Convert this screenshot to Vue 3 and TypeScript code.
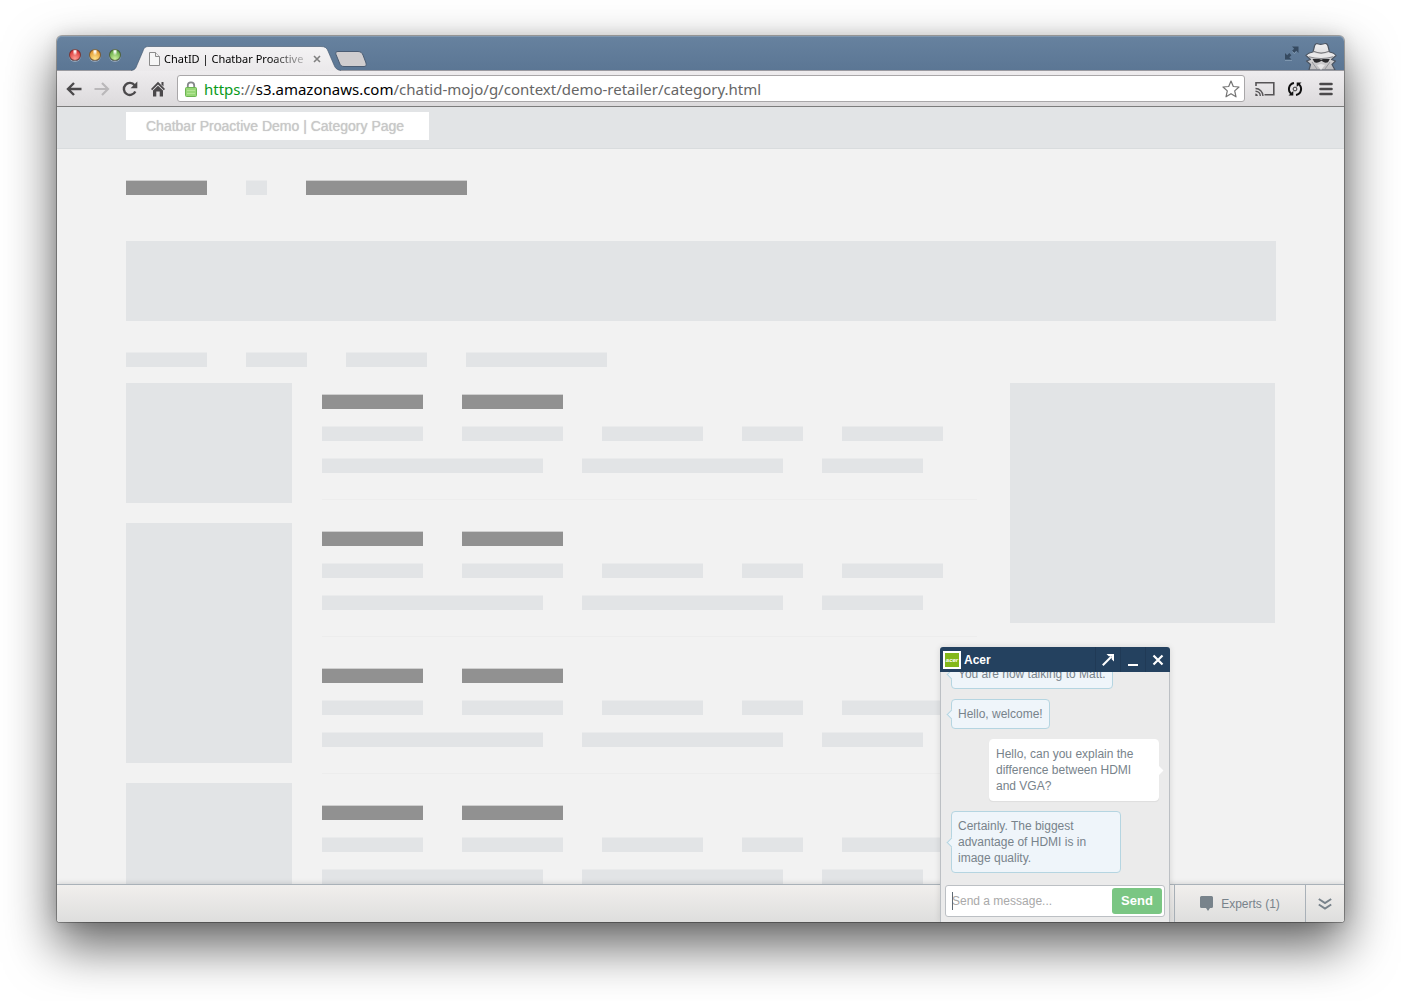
<script setup lang="ts">
import { ref } from 'vue'

interface Message {
  from: 'agent' | 'visitor'
  text: string
}

const messages: Message[] = [
  { from: 'agent', text: 'You are now talking to Matt.' },
  { from: 'agent', text: 'Hello, welcome!' },
  { from: 'visitor', text: 'Hello, can you explain the difference between HDMI and VGA?' },
  { from: 'agent', text: 'Certainly. The biggest advantage of HDMI is in image quality.' },
]

const breadcrumb = [
  { width: 81, dark: true },
  { width: 21, dark: false },
  { width: 161, dark: true },
]
const filters = [81, 61, 81, 141]
const productRows = [
  { dark: true, widths: [101, 101] },
  { dark: false, widths: [101, 101, 101, 61, 101] },
  { dark: false, widths: [221, 201, 101] },
]
const products = [1, 2, 3, 4]

const draft = ref('')
</script>

<template>
  <div class="desktop">
    <div class="window">
      <header class="tabstrip">
        <div class="lights">
          <button class="light red" aria-label="Close window"></button>
          <button class="light amber" aria-label="Minimise window"></button>
          <button class="light green" aria-label="Zoom window"></button>
        </div>
        <div class="tab">
          <svg class="tab-shape" viewBox="0 0 210 25" width="210" height="25" aria-hidden="true">
            <defs>
              <linearGradient id="tabfill" x1="0" y1="0" x2="0" y2="1">
                <stop offset="0" stop-color="#f4f3f4" />
                <stop offset="1" stop-color="#ebe9eb" />
              </linearGradient>
            </defs>
            <path
              d="M0 25 C4 24 5 22 6 19 L12 5 C13 2 14 .5 18 .5 H190 C194 .5 196 2 197 5 L203 19 C204 22 206 24 210 25 Z"
              fill="url(#tabfill)"
            />
            <path
              d="M0 24.500 C4 24 5 22 6 19 L12 5 C13 2 14 .5 18 .5 H190 C194 .5 196 2 197 5 L203 19 C204 22 206 24 210 24.500"
              fill="none"
              stroke="#40536b"
              stroke-opacity=".6"
            />
          </svg>
          <svg class="doc" viewBox="0 0 11 14" width="11" height="14" aria-hidden="true">
            <path d="M.5 .5H6.500L10.500 4.500V13.500H.5Z" fill="#f6f6f6" stroke="#8b8b8b" />
            <path d="M6.500 .5V4.500H10.500" fill="#eee" stroke="#8b8b8b" />
          </svg>
          <span class="tab-title">ChatID | Chatbar Proactive</span>
          <button class="tab-close" aria-label="Close tab">
            <svg viewBox="0 0 8 8" width="8" height="8"><path d="M1 1L7 7M7 1L1 7" stroke="#808080" stroke-width="1.600" /></svg>
          </button>
        </div>
        <button class="new-tab" aria-label="New tab">
          <svg viewBox="0 0 32 16" width="32" height="16">
            <path d="M3 .5H23C26 .5 27 2 28 4L31 12C31.500 14.500 31 15.500 29 15.500H9C6.500 15.500 5.500 14.500 4.500 12L1 3.500C.3 1.500 1 .5 3 .5Z" fill="#cfcdcf" stroke="#4a5c73" />
          </svg>
        </button>
        <span class="spacer"></span>
        <button class="fullscreen" aria-label="Enter full screen">
          <svg viewBox="0 0 16 16" width="16" height="16">
            <path d="M8 1.500H14.500V8L12.300 5.800L10.200 7.900L8.100 5.800L10.200 3.700ZM1 8L3.200 10.200L5.300 8.100L7.400 10.200L5.300 12.300L7.500 14.500H1Z" fill="#364a60" />
            <path d="M1 15.500H8M8.500 6.500L10.200 8.600L12.300 6.600" fill="none" stroke="#8da3b9" stroke-width=".7" />
          </svg>
        </button>
        <svg class="incognito" viewBox="0 0 34 28" width="34" height="28" aria-hidden="true">
          <defs>
            <linearGradient id="coat" x1="0" y1="0" x2="0" y2="1">
              <stop offset="0" stop-color="#f2f1f2" />
              <stop offset="1" stop-color="#bdbcbe" />
            </linearGradient>
          </defs>
          <path d="M5 28L6.500 22.500L2.500 19L6.500 17.500L2 13.500Q4.500 11 9 10.200L10.500 4C11.200 1.500 13 1.300 14.500 2Q16.500 2.800 19 2C21.500 1 23.300 1.500 24 4L25.500 10.200Q30 11 32 13.500L27.500 17.500L31.500 19L28 22.500L31 28Z" fill="url(#coat)" stroke="#4c5562" stroke-width="1.200" stroke-linejoin="round" />
          <path d="M2.500 13.500Q4.500 11.300 9 10.500Q17 13.500 25.500 10.500Q30 11.300 31.500 13.500Q17 18.500 2.500 13.500Z" fill="#e9e8e9" />
          <path d="M9.300 9.300Q17 12.800 25.200 9.300" fill="none" stroke="#77777b" stroke-width="1.200" />
          <path d="M5 14.800Q17 18.300 29 14.800" fill="none" stroke="#88888c" stroke-width="1" />
          <path d="M8.500 17H15.300L17.200 17.800L19 17H25.800L24 20.300Q21.500 21.300 19.500 20L17.500 18.800L15.300 20Q12.500 21.300 10.500 20.300Z" fill="#2b2b2e" />
          <path d="M8 20L13 27M26 20L21 27" fill="none" stroke="#97979b" />
          <path d="M13 23L17 28L21 23L17 22Z" fill="#e6e5e6" />
        </svg>
      </header>

      <nav class="toolbar">
        <button class="tool" aria-label="Back">
          <svg viewBox="0 0 16 16" width="16" height="16"><path d="M8 2L2 8L8 14M2 8H15.500" fill="none" stroke="#4b494b" stroke-width="2.400" /></svg>
        </button>
        <button class="tool" aria-label="Forward">
          <svg viewBox="0 0 16 16" width="16" height="16"><path d="M8 2L14 8L8 14M14 8H.5" fill="none" stroke="#bab8ba" stroke-width="2.200" /></svg>
        </button>
        <button class="tool" aria-label="Reload">
          <svg viewBox="0 0 16 16" width="16" height="16">
            <path d="M12.600 4.200A6 6 0 1 0 13.300 10.500" fill="none" stroke="#4b494b" stroke-width="2.400" />
            <path d="M15.300 .5V7.200H8.600Z" fill="#4b494b" />
          </svg>
        </button>
        <button class="tool" aria-label="Home">
          <svg viewBox="0 0 16 16" width="16" height="16">
            <path d="M8 .8L15 8L13.800 9.200L8 3.400L2.200 9.200L1 8Z" fill="#4b494b" />
            <path d="M11.500 1H13.500V5.500L11.500 3.500Z" fill="#4b494b" />
            <path d="M8 4.800L13 9.600V15.500H9.700V10.500H6.300V15.500H3V9.600Z" fill="#4b494b" />
          </svg>
        </button>
        <div class="omnibox">
          <svg viewBox="0 0 12 16" width="12" height="16" aria-hidden="true">
            <path d="M2.800 8V4.500A3.200 3.200 0 0 1 9.200 4.500V8" fill="none" stroke="#85878a" stroke-width="1.800" />
            <rect x=".5" y="6.500" width="11" height="9" rx="1" fill="#98d878" stroke="#6cb452" />
            <path d="M2 9.500H10M2 12.500H10" stroke="#b4e596" />
          </svg>
          <a class="url" href="https://s3.amazonaws.com/chatid-mojo/g/context/demo-retailer/category.html"><span class="scheme">https</span>://<span class="host">s3.amazonaws.com</span>/chatid-mojo/g/context/demo-retailer/category.html</a>
          <button class="star" aria-label="Bookmark this page">
            <svg viewBox="0 0 18 18" width="18" height="18"><path d="M9 1L11.300 6.500L17 7L12.700 10.900L14 16.800L9 13.700L4 16.800L5.300 10.900L1 7L6.700 6.500Z" fill="#fff" stroke="#737373" stroke-width="1.200" stroke-linejoin="round" /></svg>
          </button>
        </div>
        <button class="ext cast" aria-label="Cast">
          <svg viewBox="0 0 20 16" width="20" height="16">
            <path d="M1 5V1.700H18.800V13.800H9.500" fill="none" stroke="#565456" stroke-width="1.600" />
            <path d="M.5 7.500A7.500 7.500 0 0 1 8 15M.5 10.200A4.800 4.800 0 0 1 5.300 15" fill="none" stroke="#565456" stroke-width="1.400" />
            <path d="M.3 12.500A2.500 2.500 0 0 1 2.800 15H.3Z" fill="#565456" />
          </svg>
        </button>
        <button class="ext" aria-label="Sync">
          <svg viewBox="0 0 16 16" width="16" height="16">
            <path d="M7 2A6 6 0 0 0 4.300 12.700M9 14A6 6 0 0 0 11.700 3.300" fill="none" stroke="#111" stroke-width="2" />
            <path d="M1.500 14.500H6.300V10ZM14.500 1.500H9.700V6Z" fill="#111" />
            <circle cx="8" cy="8" r="1.900" fill="none" stroke="#222" stroke-width=".9" />
          </svg>
        </button>
        <button class="ext menu" aria-label="Menu">
          <svg viewBox="0 0 14 14" width="14" height="14"><path d="M1.500 2H12.500M1.500 7H12.500M1.500 12H12.500" stroke="#4b494b" stroke-width="2.600" stroke-linecap="round" /></svg>
        </button>
      </nav>

      <div class="viewport">
        <main class="page">
          <div class="site-head"><h1>Chatbar Proactive Demo | Category Page</h1></div>
          <div class="content">
            <div class="bars crumbs">
              <span v-for="(bar, i) in breadcrumb" :key="i" class="bar" :class="{ dark: bar.dark }" :style="{ width: bar.width + 'px' }"></span>
            </div>
            <div class="banner"></div>
            <div class="bars filters">
              <span v-for="(w, i) in filters" :key="i" class="bar" :style="{ width: w + 'px' }"></span>
            </div>
            <div class="columns">
              <aside class="left">
                <div class="block short"></div>
                <div class="block"></div>
                <div class="block"></div>
              </aside>
              <section class="list">
                <article v-for="p in products" :key="p" class="product">
                  <div v-for="(row, r) in productRows" :key="r" class="bars">
                    <span v-for="(w, i) in row.widths" :key="i" class="bar" :class="{ dark: row.dark }" :style="{ width: w + 'px' }"></span>
                  </div>
                </article>
              </section>
              <aside class="right"></aside>
            </div>
          </div>
        </main>

        <footer class="chatbar">
          <button class="experts">
            <svg viewBox="0 0 13 15" width="13" height="15" aria-hidden="true"><path d="M1.500 0H11.500Q13 0 13 1.500V10.500Q13 12 11.500 12H10L8 15L6 12H1.500Q0 12 0 10.500V1.500Q0 0 1.500 0Z" fill="#78838b" /></svg>
            Experts (1)
          </button>
          <button class="collapse" aria-label="Collapse chat bar">
            <svg viewBox="0 0 14 12" width="14" height="12"><path d="M.8 1L7 5L13.200 1M.8 6.500L7 10.500L13.200 6.500" fill="none" stroke="#78838b" stroke-width="2" /></svg>
          </button>
        </footer>

        <section class="chat" aria-label="Chat with Acer">
          <header class="chat-head">
            <span class="logo"><span>acer</span></span>
            <h2>Acer</h2>
            <button aria-label="Pop out">
              <svg viewBox="0 0 12 12" width="12" height="12"><path d="M.8 11.200L9.500 2.500" fill="none" stroke="#fff" stroke-width="2" /><path d="M4.500 0H12V7.500L9.700 5.200V2.300H6.800Z" fill="#fff" /></svg>
            </button>
            <button aria-label="Minimise chat">
              <svg viewBox="0 0 12 12" width="12" height="12"><path d="M1 11H11" stroke="#fff" stroke-width="2" /></svg>
            </button>
            <button aria-label="Close chat">
              <svg viewBox="0 0 12 12" width="12" height="12"><path d="M1.500 1.500L10.500 10.500M10.500 1.500L1.500 10.500" stroke="#fff" stroke-width="2.200" /></svg>
            </button>
          </header>
          <div class="messages">
            <p v-for="(m, i) in messages" :key="i" class="bubble" :class="m.from">{{ m.text }}</p>
          </div>
          <form class="composer" @submit.prevent="draft = ''">
            <span class="caret"></span>
            <input v-model="draft" type="text" placeholder="Send a message..." aria-label="Message" />
            <button type="submit">Send</button>
          </form>
        </section>
      </div>
    </div>
  </div>
</template>

<style>
body {
  background: #fff;
}
</style>

<style scoped>
* {
  box-sizing: border-box;
}
button {
  border: 0;
  padding: 0;
  margin: 0;
  background: none;
  font: inherit;
  color: inherit;
}
svg {
  display: block;
  flex: none;
}
.desktop {
  height: 100vh;
  padding: 36px 57px 79px;
  overflow: hidden;
  font-family: "Liberation Sans", Arial, sans-serif;
}
.window {
  height: 100%;
  display: flex;
  flex-direction: column;
  border-radius: 5px 5px 3px 3px;
  box-shadow: 0 0 0 1px rgba(0, 0, 0, 0.3), 0 0 16px rgba(0, 0, 0, 0.12), 0 23px 50px 2px rgba(0, 0, 0, 0.6);
}
.tabstrip {
  flex: none;
  height: 35px;
  display: flex;
  align-items: flex-end;
  padding: 0 6px 0 12px;
  border-radius: 5px 5px 0 0;
  border-bottom: 1px solid #9a9aa0;
  background: linear-gradient(#67829f, #5b7694);
  box-shadow: inset 0 1px 0 #8198b0;
}
.lights {
  display: flex;
  gap: 8px;
  padding-bottom: 9px;
}
.light {
  width: 12px;
  height: 12px;
  border-radius: 50%;
  border: 1px solid rgba(50, 40, 40, 0.6);
  box-shadow: 0 1px 0 rgba(255, 255, 255, 0.35);
}
.red {
  background: radial-gradient(ellipse at 50% 15%, #fff 5%, transparent 35%), radial-gradient(circle at 50% 85%, #ff9c93, #dc3b3b 75%);
}
.amber {
  background: radial-gradient(ellipse at 50% 15%, #fff 5%, transparent 35%), radial-gradient(circle at 50% 85%, #ffe38a, #e39a32 75%);
}
.green {
  background: radial-gradient(ellipse at 50% 15%, #fff 5%, transparent 35%), radial-gradient(circle at 50% 85%, #c9f09c, #68ab48 75%);
}
.tab {
  position: relative;
  width: 210px;
  height: 25px;
  margin: 0 0 -1px 10px;
  padding: 0 16px 0 18px;
  display: flex;
  align-items: center;
}
.tab-shape {
  position: absolute;
  left: 0;
  top: 0;
}
.doc,
.tab-title,
.tab-close {
  position: relative;
}
.tab-title {
  flex: 1;
  margin-left: 4px;
  white-space: nowrap;
  font: 11px/16px "Noto Sans", sans-serif;
  color: #000;
  -webkit-mask-image: linear-gradient(90deg, #000 75%, rgba(0, 0, 0, 0.2));
  mask-image: linear-gradient(90deg, #000 75%, rgba(0, 0, 0, 0.2));
}
.tab-close {
  width: 8px;
  height: 8px;
  margin: 0 4px 0 8px;
}
.new-tab {
  margin: 0 0 3px -6px;
}
.spacer {
  flex: 1;
}
.fullscreen {
  margin: 0 4px 9px 0;
}
.toolbar {
  flex: none;
  height: 36px;
  display: flex;
  align-items: center;
  padding: 0 10px 0 9px;
  border-bottom: 1px solid #7c7c7c;
  background: linear-gradient(#eeecee, #dcdadc);
}
.tool {
  width: 16px;
  height: 16px;
  margin-right: 12px;
}
.omnibox {
  flex: 1;
  min-width: 0;
  height: 27px;
  margin-left: -1px;
  padding: 0 4px 0 7px;
  display: flex;
  align-items: center;
  border: 1px solid #a9a7a9;
  border-radius: 3px;
  background: #fff;
}
.url {
  flex: 1;
  min-width: 0;
  margin-left: 7px;
  overflow: hidden;
  white-space: nowrap;
  font: 15px/22px "Noto Sans", sans-serif;
  color: #666;
  text-decoration: none;
}
.scheme {
  color: #0a9a1a;
}
.host {
  color: #000;
}
.ext {
  margin-left: 12px;
}
.cast {
  margin-left: 10px;
}
.menu {
  margin: 0 0 0 16px;
  padding-right: 1px;
}
.viewport {
  position: relative;
  flex: 1;
  min-height: 0;
  display: flex;
  flex-direction: column;
  border-radius: 0 0 3px 3px;
  overflow: hidden;
  background: #f2f2f2;
}
.page {
  flex: 1;
  min-height: 0;
  overflow: hidden;
}
.site-head {
  height: 42px;
  padding: 5px 69px 0;
  border-bottom: 1px solid #d9dcde;
  background: #e2e4e6;
}
.site-head h1 {
  width: max-content;
  min-width: 303px;
  height: 28px;
  margin: 0;
  padding: 0 20px;
  background: #fff;
  font-size: 14px;
  line-height: 28px;
  font-weight: 400;
  color: #c8c8c8;
  text-shadow: 0 0 1px #c8c8c8;
}
.content {
  padding: 31px 68px 0 69px;
}
.bars {
  display: flex;
  gap: 39px;
}
.bar {
  flex: none;
  height: 15px;
  border-top: 1px solid #eaebec;
  background: #e2e4e6;
}
.bar.dark {
  border-top-color: #cfcfcf;
  background: #919191;
}
.banner {
  height: 80px;
  margin: 46px 0 31px;
  background: #e2e4e6;
}
.columns {
  display: flex;
  align-items: flex-start;
  margin-top: 16px;
}
.left {
  flex: none;
  width: 166px;
  margin-right: 30px;
  display: flex;
  flex-direction: column;
  gap: 20px;
}
.block {
  height: 240px;
  background: #e2e4e6;
}
.block.short {
  height: 120px;
}
.list {
  flex: 1;
  min-width: 0;
  margin-right: 33px;
}
.product {
  height: 137px;
  padding-top: 31px;
  display: flex;
  flex-direction: column;
  gap: 17px;
  overflow: hidden;
  border-bottom: 1px solid #ededed;
}
.product:first-child {
  height: 117px;
  padding-top: 11px;
}
.right {
  flex: none;
  width: 265px;
  height: 240px;
  margin-right: 1px;
  background: #e2e4e6;
}
.chatbar {
  position: relative;
  flex: none;
  height: 38px;
  display: flex;
  justify-content: flex-end;
  border-top: 1px solid #a9b1b8;
  background: linear-gradient(#f1efed, #dededd);
  box-shadow: 0 -1px 5px rgba(0, 0, 0, 0.12);
  font-size: 12px;
  color: #78838b;
}
.experts {
  width: 131px;
  display: flex;
  align-items: center;
  justify-content: center;
  gap: 8px;
  border-left: 1px solid #a9b1b8;
}
.collapse {
  width: 39px;
  display: flex;
  align-items: center;
  justify-content: center;
  border-left: 1px solid #a9b1b8;
}
.chat {
  position: absolute;
  right: 174px;
  bottom: 0;
  width: 230px;
  height: 275px;
  display: flex;
  flex-direction: column;
  border-radius: 3px 3px 0 0;
  background: #ebebeb;
  box-shadow: 0 0 6px rgba(0, 0, 0, 0.12);
}
.chat-head {
  flex: none;
  height: 25px;
  display: flex;
  align-items: center;
  padding-left: 3px;
  border-radius: 3px 3px 0 0;
  background: #24415f;
}
.logo {
  width: 18px;
  height: 18px;
  border: 2px solid #fff;
  background: #83b81a;
  color: #fff;
  font: italic 700 6px/12px "Liberation Sans", sans-serif;
  display: flex;
  justify-content: center;
  align-items: center;
}
.chat-head h2 {
  flex: 1;
  margin: 0 0 0 3px;
  font-size: 12px;
  line-height: 24px;
  font-weight: 700;
  color: #fff;
}
.chat-head button {
  width: 25px;
  height: 25px;
  display: flex;
  align-items: center;
  justify-content: center;
  border-left: 1px solid #203a56;
}
.messages {
  flex: 1;
  min-height: 0;
  display: flex;
  flex-direction: column;
  justify-content: flex-end;
  align-items: flex-start;
  gap: 10px;
  padding: 0 10px 12px;
  overflow: hidden;
  border: solid #bcc0c4;
  border-width: 0 1px;
}
.bubble {
  position: relative;
  flex: none;
  max-width: 170px;
  margin: 0;
  padding: 6px;
  border: 1px solid #b5d5e1;
  border-radius: 4px;
  background: #eff5fa;
  font-size: 12px;
  line-height: 16px;
  color: #78838b;
}
.bubble::before {
  content: "";
  position: absolute;
  left: -4px;
  top: 50%;
  width: 6px;
  height: 6px;
  margin-top: -3px;
  border: solid #b5d5e1;
  border-width: 0 0 1px 1px;
  background: #eff5fa;
  transform: rotate(45deg);
}
.visitor {
  align-self: flex-end;
  border-color: #fff;
  background: #fff;
  box-shadow: 0 1px 1px rgba(0, 0, 0, 0.06);
}
.visitor::before {
  left: auto;
  right: -4px;
  border-color: #fff;
  background: #fff;
}
.composer {
  flex: none;
  height: 37px;
  display: flex;
  align-items: flex-start;
  padding: 0 4px 5px;
  position: relative;
  border: solid #bcc0c4;
  border-width: 0 1px;
}
.composer input {
  flex: 1;
  min-width: 0;
  height: 32px;
  margin: 0;
  padding: 0 56px 0 6px;
  border: 1px solid #bcc0c4;
  border-radius: 3px;
  background: #fff;
  font: 12px/16px "Liberation Sans", Arial, sans-serif;
  color: #78838b;
  outline: 0;
}
.composer input::placeholder {
  color: #a9a9a9;
  opacity: 1;
}
.composer button {
  position: absolute;
  right: 7px;
  top: 3px;
  width: 50px;
  height: 26px;
  border-radius: 3px;
  background: #7ac683;
  color: #fff;
  font: 700 13px/26px "Liberation Sans", Arial, sans-serif;
}
.caret {
  position: absolute;
  left: 11px;
  top: 7px;
  width: 1px;
  height: 18px;
  background: #5f6b75;
}
</style>
